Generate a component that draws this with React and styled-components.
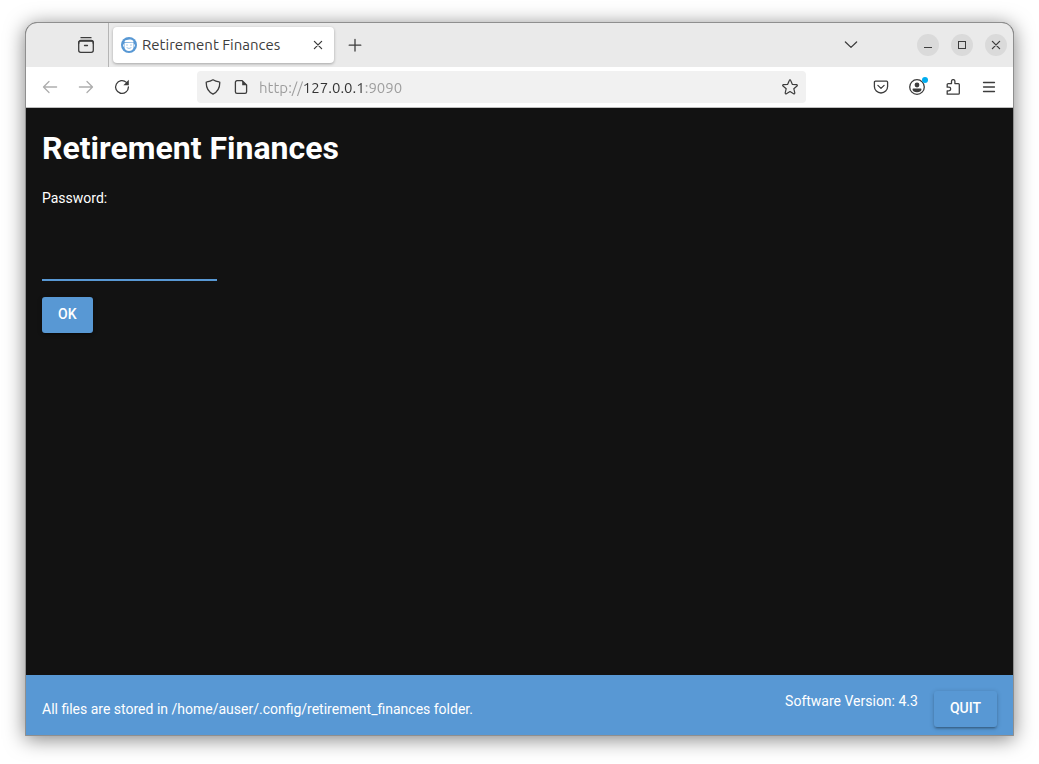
import React from "react";
import styled, { createGlobalStyle, css } from "styled-components";

const GlobalStyle = createGlobalStyle`
  *, *::before, *::after { box-sizing: border-box; }
  body { margin: 0; background: #ffffff; }
  button, input { font: inherit; }
`;

const uiFont = `"Ubuntu", "Noto Sans", "Open Sans", sans-serif`;
const pageFont = `Roboto, "Liberation Sans", sans-serif`;
const accent = "#5898d4";

const Desktop = styled.div`
  display: flex;
  min-height: 100vh;
  padding: 22px 25px 28px;
`;

const BrowserWindow = styled.div`
  display: flex;
  flex-direction: column;
  flex: 1;
  min-width: 0;
  border: 1px solid #8f8f8f;
  border-radius: 12px 12px 0 0;
  overflow: hidden;
  background: #121212;
  box-shadow: 0 3px 20px rgba(0, 0, 0, 0.5);
`;

const TabBar = styled.header`
  display: flex;
  align-items: center;
  height: 44px;
  padding: 0 6px 0 42px;
  background: #eaeaea;
  font-family: ${uiFont};
`;

const IconButton = styled.button`
  position: relative;
  display: flex;
  flex: none;
  align-items: center;
  justify-content: center;
  width: ${({ $size = 36 }) => $size}px;
  height: ${({ $size = 36 }) => $size}px;
  padding: 0;
  border: 0;
  border-radius: 4px;
  background: transparent;
  color: #3d3d3d;

  &:disabled { color: #aeaeae; }
`;

const Tab = styled.div`
  display: flex;
  align-items: center;
  gap: 5px;
  width: 221px;
  height: 36px;
  margin: 0 3px 0 4px;
  padding: 0 4px 0 8px;
  border-radius: 4px;
  background: #ffffff;
  box-shadow: 0 1px 3px rgba(0, 0, 0, 0.3);
`;

const TabTitle = styled.span`
  flex: 1;
  color: #3d3d3d;
  font-size: 15px;
  line-height: 20px;
  white-space: nowrap;
`;

const TabDivider = styled.div`
  align-self: stretch;
  width: 1px;
  margin-left: 4px;
  background: #b5b5b5;
`;

const Spacer = styled.div`
  flex: 1;
`;

const WindowControls = styled.div`
  display: flex;
  gap: 12px;
  margin-left: 48px;
`;

const WindowButton = styled(IconButton)`
  border-radius: 50%;
  background: #dadada;
`;

const Toolbar = styled.nav`
  display: flex;
  align-items: center;
  height: 41px;
  padding: 0 6px;
  border-bottom: 1px solid #bebebe;
  background: #ffffff;
  font-family: ${uiFont};
`;

const AddressBar = styled.div`
  display: flex;
  flex: 1;
  align-items: center;
  min-width: 0;
  height: 32px;
  margin: 0 57px;
  padding: 0 2px;
  border-radius: 4px;
  background: #f1f1f1;
`;

const AddressInput = styled.input`
  flex: 1;
  min-width: 0;
  height: 24px;
  margin-left: 4px;
  padding: 0;
  border: 0;
  outline: 0;
  background: linear-gradient(to right, #9b9b9b 45px, #333333 45px, #333333 105px, #9b9b9b 105px);
  background-clip: text;
  color: transparent;
  font-size: 15px;
`;

const Page = styled.main`
  display: flex;
  flex: 1;
  flex-direction: column;
  align-items: flex-start;
  gap: 16px;
  padding: 16px;
  background: #121212;
  color: #ffffff;
  font-family: ${pageFont};
  font-size: 14px;
  line-height: 21px;
`;

const Heading = styled.h1`
  margin: 0;
  font-size: 32px;
  font-weight: 700;
  line-height: 48px;
`;

const PasswordInput = styled.input`
  width: 175px;
  height: 56px;
  padding: 0;
  border: 0;
  border-bottom: 2px solid ${accent};
  outline: 0;
  background: transparent;
  color: #ffffff;
`;

const raised = css`
  box-shadow: 0 1px 5px rgba(0, 0, 0, 0.2), 0 2px 2px rgba(0, 0, 0, 0.14), 0 3px 1px -2px rgba(0, 0, 0, 0.12);
`;

const ActionButton = styled.button`
  height: 36px;
  padding: 0 16px 2px;
  border: 0;
  border-radius: 3px;
  background: ${accent};
  color: #ffffff;
  font-size: 14px;
  font-weight: 500;
  line-height: 24px;
  text-transform: uppercase;
  ${raised}
`;

const StatusBar = styled.footer`
  display: flex;
  align-items: center;
  gap: 16px;
  padding: 16px 16px 8px;
  background: ${accent};
  color: #ffffff;
  font-family: ${pageFont};
  font-size: 14px;
  line-height: 21px;
`;

const StoragePath = styled.span`
  flex: 1;
`;

const Version = styled.span`
  align-self: flex-start;
`;

const Glyph = ({ size = 16, children, ...rest }) => (
  <svg
    width={size}
    height={size}
    viewBox={`0 0 ${size} ${size}`}
    fill="none"
    stroke="currentColor"
    strokeWidth="1.3"
    strokeLinecap="round"
    strokeLinejoin="round"
    aria-hidden="true"
    {...rest}
  >
    {children}
  </svg>
);

const ViewIcon = () => (
  <Glyph size={18}>
    <path d="M4 1.7h10" />
    <rect x="1.7" y="5" width="14.6" height="11.3" rx="2" />
    <path d="M1.7 7.5V6.5a2 2 0 0 1 2-2h10.6a2 2 0 0 1 2 2v1M7.5 9.5h3" />
  </Glyph>
);

const Favicon = () => (
  <svg width="16" height="16" viewBox="0 0 16 16" aria-hidden="true">
    <circle cx="8" cy="8" r="8" fill={accent} />
    <path d="M3.6 5.2C3.400 3.600 4.600 2.900 6 3c1.200-.9 4.900-.8 6 .6.500.6.500 1.200.4 1.800z" fill="#fff" />
    <path d="M3.500 6h9v4.200c0 2.200-2 3.700-4.500 3.700s-4.500-1.500-4.500-3.700z" fill="#fff" />
    <path d="M2.700 7.400v2.200M13.300 7.400v2.200" stroke="#fff" strokeWidth="1" />
    <path d="M5.200 8.200q.8-.8 1.600 0M9.200 8.200q.8-.8 1.600 0M5.600 10.600q2.400 1.800 4.800 0" fill="none" stroke={accent} strokeWidth=".6" />
  </svg>
);

const CrossIcon = () => (
  <Glyph><path d="M4.4 4.4l7.2 7.2M11.6 4.4l-7.2 7.2" /></Glyph>
);

const PlusIcon = () => (
  <Glyph><path d="M8 2.5v11.5M2.2 8.2h11.6" /></Glyph>
);

const ChevronIcon = () => (
  <Glyph><path d="M2.4 5L8 10.4 13.6 5" /></Glyph>
);

const MinimizeIcon = () => (
  <Glyph strokeWidth="1" strokeLinecap="butt"><path d="M4 10.5h8" /></Glyph>
);

const MaximizeIcon = () => (
  <Glyph strokeWidth="1" strokeLinejoin="miter"><rect x="4.5" y="4.5" width="7" height="7" /></Glyph>
);

const BackIcon = () => (
  <Glyph><path d="M14.6 8H1.7M7 2.5L1.5 8 7 13.5" /></Glyph>
);

const ForwardIcon = () => (
  <Glyph><path d="M1.4 8h12.9M9 2.5L14.5 8 9 13.5" /></Glyph>
);

const ReloadIcon = () => (
  <Glyph>
    <path d="M12.4 3.4A6.4 6.4 0 1 0 14.4 8" />
    <path d="M14.8.8v5.4H9.4z" fill="currentColor" stroke="none" />
  </Glyph>
);

const ShieldIcon = () => (
  <Glyph>
    <path d="M8 .8c1.6 1.1 3.9 1.9 6.1 2 .5 0 .7.4.7.8 0 5-1.8 9.2-6.8 11.6C3 12.800 1.200 8.600 1.200 3.600c0-.4.2-.8.7-.8C4.100 2.700 6.400 1.900 8 .8z" />
  </Glyph>
);

const DocumentIcon = () => (
  <Glyph>
    <path d="M9.200 1.700H4a1.600 1.600 0 0 0-1.600 1.600v9.400A1.600 1.600 0 0 0 4 14.300h8a1.600 1.600 0 0 0 1.600-1.600V6z" />
    <path d="M9.200 1.500v4.700h4.600z" fill="currentColor" stroke="none" />
  </Glyph>
);

const StarIcon = () => (
  <Glyph strokeWidth="1.2">
    <path d="M8 .9c.3 0 .6.2.7.5l1.600 3.900 4.200.3c.8.1 1.100.9.500 1.400l-3.200 2.700 1 4.100c.2.800-.6 1.300-1.200.9L8 12.500l-3.600 2.200c-.6.4-1.400-.1-1.200-.9l1-4.100L1 7c-.6-.5-.3-1.300.5-1.400l4.200-.3 1.600-3.900c.1-.3.4-.5.7-.5z" />
  </Glyph>
);

const PocketIcon = () => (
  <Glyph>
    <path d="M2.400 2.200h11.200a1 1 0 0 1 1 1v4.200a6.600 6.600 0 0 1-13.200 0V3.200a1 1 0 0 1 1-1z" />
    <path d="M4.900 6.400L8 9.400l3.100-3" />
  </Glyph>
);

const AccountIcon = () => (
  <Glyph size={18} overflow="visible">
    <circle cx="9" cy="9" r="7.300" />
    <circle cx="9" cy="7" r="2.400" fill="currentColor" stroke="none" />
    <path d="M4.500 11.200c0-.4.300-.7.700-.7h7.600c.4 0 .7.300.7.700 0 1.700-1.900 3-4.500 3s-4.500-1.300-4.500-3z" fill="currentColor" stroke="none" />
    <circle cx="17" cy="2" r="3" fill="#00adef" stroke="none" />
  </Glyph>
);

const ExtensionIcon = () => (
  <Glyph>
    <path d="M2.200 15.200V11.800h1.700a1.800 1.800 0 0 0 0-3.600H2.200V5.600a1 1 0 0 1 1-1h3.300V2.300a1.700 1.700 0 0 1 3.400 0v2.300h3.400a1 1 0 0 1 1 1v8.600a1 1 0 0 1-1 1z" />
  </Glyph>
);

const MenuIcon = () => (
  <Glyph><path d="M2.500 3.500h11M2.500 8h11M2.500 12.500h11" /></Glyph>
);

export default function App() {
  return (
    <>
      <GlobalStyle />
      <Desktop>
        <BrowserWindow>
          <TabBar>
            <IconButton aria-label="View recent browsing"><ViewIcon /></IconButton>
            <TabDivider />
            <Tab>
              <Favicon />
              <TabTitle>Retirement Finances</TabTitle>
              <IconButton $size={24} aria-label="Close tab"><CrossIcon /></IconButton>
            </Tab>
            <IconButton aria-label="New tab"><PlusIcon /></IconButton>
            <Spacer />
            <IconButton aria-label="List all tabs"><ChevronIcon /></IconButton>
            <WindowControls>
              <WindowButton $size={22} aria-label="Minimize"><MinimizeIcon /></WindowButton>
              <WindowButton $size={22} aria-label="Maximize"><MaximizeIcon /></WindowButton>
              <WindowButton $size={22} aria-label="Close window"><CrossIcon /></WindowButton>
            </WindowControls>
          </TabBar>
          <Toolbar aria-label="Navigation">
            <IconButton disabled aria-label="Back"><BackIcon /></IconButton>
            <IconButton disabled aria-label="Forward"><ForwardIcon /></IconButton>
            <IconButton aria-label="Reload"><ReloadIcon /></IconButton>
            <AddressBar>
              <IconButton $size={28} aria-label="Tracking protection"><ShieldIcon /></IconButton>
              <IconButton $size={28} aria-label="Site information"><DocumentIcon /></IconButton>
              <AddressInput aria-label="Address" defaultValue="http://127.0.0.1:9090" />
              <IconButton $size={28} aria-label="Bookmark this page"><StarIcon /></IconButton>
            </AddressBar>
            <IconButton aria-label="Save to Pocket"><PocketIcon /></IconButton>
            <IconButton aria-label="Account"><AccountIcon /></IconButton>
            <IconButton aria-label="Extensions"><ExtensionIcon /></IconButton>
            <IconButton aria-label="Application menu"><MenuIcon /></IconButton>
          </Toolbar>
          <Page>
            <Heading>Retirement Finances</Heading>
            <label htmlFor="password">Password:</label>
            <PasswordInput id="password" type="password" />
            <ActionButton type="button">OK</ActionButton>
          </Page>
          <StatusBar>
            <StoragePath>All files are stored in /home/auser/.config/retirement_finances folder.</StoragePath>
            <Version>Software Version: 4.3</Version>
            <ActionButton type="button">Quit</ActionButton>
          </StatusBar>
        </BrowserWindow>
      </Desktop>
    </>
  );
}
